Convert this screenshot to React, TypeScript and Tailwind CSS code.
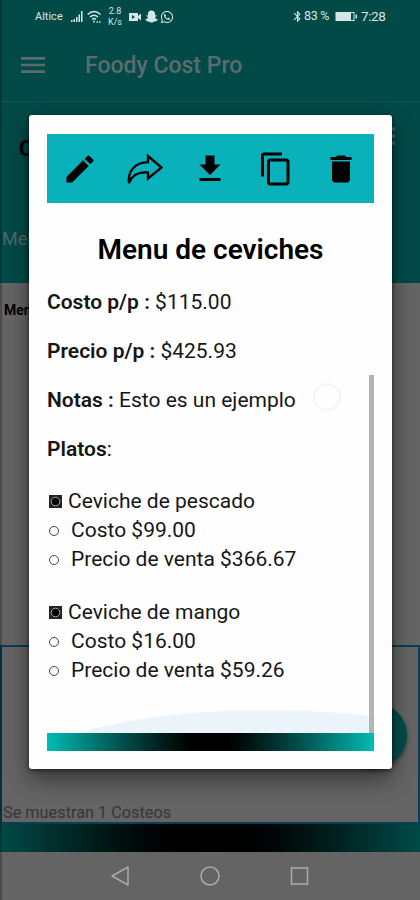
import { FaSnapchatGhost, FaWhatsapp } from 'react-icons/fa';
import { MdBluetooth, MdContentCopy, MdEdit, MdFileDownload, MdMenu } from 'react-icons/md';

const platos = [
  { nombre: 'Ceviche de pescado', costo: '$99.00', precio: '$366.67' },
  { nombre: 'Ceviche de mango', costo: '$16.00', precio: '$59.26' },
];

function ShareIcon() {
  return (
    <svg width="38" height="34" viewBox="0 0 38 34" fill="none" stroke="black" strokeWidth="2.300" strokeLinejoin="miter">
      <path d="M22 4L35.500 15.500L22 26.500V20.500C12 19.500 6 23 3 31C1.500 19 9 10.500 22 10.200Z" />
    </svg>
  );
}

function TrashIcon() {
  return (
    <svg width="36" height="36" viewBox="0 0 24 24" fill="black">
      <path d="M6 7h12v12c0 1.100-.9 2-2 2H8c-1.100 0-2-.9-2-2zM5 4h3.500l1-1h5l1 1H19v2H5z" />
    </svg>
  );
}

function StatusBar() {
  return (
    <div className="flex h-[33px] shrink-0 items-center pl-[35px] pr-[34px] text-[#d5e6e6]">
      <span className="w-[36px] text-[11px] leading-none">Altice</span>
      <svg width="12" height="12" viewBox="0 0 12 12" fill="currentColor">
        <path d="M0 9h1.500v2H0zM2.500 8H4v3H2.500zM5 6h1.500v5H5zM7.500 3.500H9V11H7.500zM10 0h1.500v11H10z" />
      </svg>
      <svg className="ml-[4px]" width="15" height="14" viewBox="0 0 15 14" fill="none" stroke="currentColor" strokeWidth="1.500">
        <path d="M.700 4.500Q7 -1.500 13.500 4.500M3 7Q7 3.500 11 7M5.200 9.300Q7 7.800 9 9.300" />
        <path d="M7 10.500v2M9.500 12h1.500M12 12h1.500" />
      </svg>
      <span className="ml-[5px] w-4 text-center text-[9px] leading-[10.500px]">
        2.8
        <br />
        K/s
      </span>
      <svg className="ml-[5px]" width="14" height="10" viewBox="0 0 14 10" fill="currentColor">
        <path fillRule="evenodd" d="M1 1h9v3l3-2.500v7L10 6v3H1zM4 3v4l3-2z" />
      </svg>
      <FaSnapchatGhost className="ml-[3px]" size={13} />
      <FaWhatsapp className="ml-[2px]" size={14} />
      <div className="ml-auto flex items-center">
        <MdBluetooth size={13} />
        <span className="w-[28px] whitespace-nowrap text-[12.500px] leading-none tracking-[-0.3px]">83 %</span>
        <svg className="ml-[3px]" width="23" height="11" viewBox="0 0 23 11">
          <rect x="1" y="1.500" width="18" height="8" fill="none" stroke="currentColor" />
          <path d="M1 1.500h15v8H1zM20.500 3.500h1.500v4h-1.500z" fill="currentColor" />
        </svg>
        <span className="ml-[3px] w-[25px] text-[13.500px] leading-none tracking-[-0.4px]">7:28</span>
      </div>
    </div>
  );
}

function CosteosPage() {
  return (
    <div className="flex h-full flex-col">
      <div className="flex h-[283px] shrink-0 flex-col bg-[#024a48]">
        <StatusBar />
        <div className="flex h-[69px] items-center border-b border-[#17534f] pb-px pl-[17px] text-[#5c6b6d]">
          <MdMenu className="-mt-1" size={32} />
          <h1 className="ml-9 whitespace-nowrap text-[23px] font-medium">Foody Cost Pro</h1>
        </div>
        <div className="flex items-start justify-between pl-[19px] pr-[25px] pt-[33px]">
          <h2 className="text-[22px] font-bold leading-7 text-black">Costeos</h2>
          <span className="-mt-[8px] flex flex-col gap-[3px]">
            <i className="size-1 rounded-full bg-[#536b6c]" />
            <i className="size-1 rounded-full bg-[#536b6c]" />
            <i className="size-1 rounded-full bg-[#536b6c]" />
          </span>
        </div>
        <div className="pl-[2px] pt-[62px] text-[18px] leading-7 text-[#52696a]">Menu</div>
      </div>
      <div className="flex h-[362px] shrink-0 bg-[#646464] pl-1 pt-[17px] text-[14px] font-bold text-black">Menu</div>
      <div className="flex h-[179px] shrink-0 flex-col justify-between border-2 border-[#0a3d58] bg-[#646464]">
        <div className="mr-[11px] mt-[56px] size-[64px] self-end rounded-full bg-[#004d4a] shadow-[0_3px_4px_#0006]" />
        <p className="pl-px text-[16.300px] leading-[19px] text-[#363636]">Se muestran 1 Costeos</p>
      </div>
      <div className="h-7 shrink-0 bg-linear-to-r from-[#004b47] via-black to-[#004b47]" />
      <div className="flex grow justify-center gap-[70px] bg-[#646464] pt-[14px] text-[#aaaaaa]">
        <svg width="20" height="20" viewBox="0 0 20 20" fill="none" stroke="currentColor" strokeWidth="1.500">
          <path d="M18 1v18L2 10z" strokeLinejoin="round" />
        </svg>
        <svg width="20" height="20" viewBox="0 0 20 20" fill="none" stroke="currentColor" strokeWidth="1.500">
          <circle cx="10" cy="10" r="9" />
        </svg>
        <svg width="20" height="20" viewBox="0 0 20 20" fill="none" stroke="currentColor" strokeWidth="1.500">
          <rect x="1.500" y="2" width="16" height="16" />
        </svg>
      </div>
    </div>
  );
}

function SquareBullet() {
  return (
    <svg width="13" height="13" viewBox="0 0 13 13">
      <rect width="13" height="13" fill="#222" />
      <circle cx="6.500" cy="6.500" r="4.300" fill="black" stroke="#aaa" strokeWidth="1" />
    </svg>
  );
}

function MenuDialog() {
  return (
    <div className="absolute left-[29px] top-[115px] flex h-[654px] w-[363px] flex-col rounded-[3px] bg-[#fefefe] pl-[18px] pr-[18px] pt-[19px] text-black shadow-[0_10px_22px_#0007,0_1px_4px_#0009]">
      <div className="grid h-[69px] w-[327px] shrink-0 grid-cols-5 place-items-center bg-[#09b1bb]">
        <MdEdit size={36} />
        <ShareIcon />
        <MdFileDownload size={36} />
        <MdContentCopy size={36} />
        <TrashIcon />
      </div>
      <div className="relative h-[530px] shrink-0 overflow-hidden text-[21px] leading-[29px] text-[#161616]">
        <h2 className="pt-[30px] text-center text-[28px] font-semibold leading-[34px] text-black">Menu de ceviches</h2>
        <div className="mt-[21px] flex flex-col gap-5 whitespace-nowrap">
          <p><b className="font-semibold">Costo p/p :</b> $115.00</p>
          <p><b className="font-semibold">Precio p/p :</b> $425.93</p>
          <p><b className="font-semibold">Notas :</b> Esto es un ejemplo</p>
          <p><b className="font-semibold">Platos</b>:</p>
        </div>
        <div className="mt-[23px] flex flex-col gap-6 whitespace-nowrap">
          {platos.map((plato) => (
            <ul key={plato.nombre}>
              <li className="flex items-center gap-[6px] pl-[2px]"><SquareBullet />{plato.nombre}</li>
              <li className="flex items-center pl-[2px]"><i className="mr-3 size-[10px] rounded-full border border-[#444]" />Costo {plato.costo}</li>
              <li className="flex items-center pl-[2px]"><i className="mr-3 size-[10px] rounded-full border border-[#444]" />Precio de venta {plato.precio}</li>
            </ul>
          ))}
        </div>
        <div className="absolute left-[266px] top-[180px] size-7 rounded-full border-2 border-[#f4f4f7]" />
        <svg className="absolute bottom-0 left-0" width="323" height="23" viewBox="0 0 323 23">
          <path d="M32 23C110 -1 230 -5 323 6V23Z" fill="#ebf4fa" />
        </svg>
        <div className="absolute bottom-0 right-0 h-[358px] w-[5px] bg-[#b3b3b3]" />
      </div>
      <div className="h-[18px] w-[327px] shrink-0 bg-linear-to-r from-[#00bdb5] via-black to-[#00bdb5]" />
    </div>
  );
}

export default function App() {
  return (
    <div className="relative h-[900px] w-[420px] overflow-hidden font-['Roboto','Liberation_Sans',sans-serif]">
      <CosteosPage />
      <div className="absolute inset-y-0 left-0 w-[2px] bg-black/25" />
      <MenuDialog />
    </div>
  );
}
